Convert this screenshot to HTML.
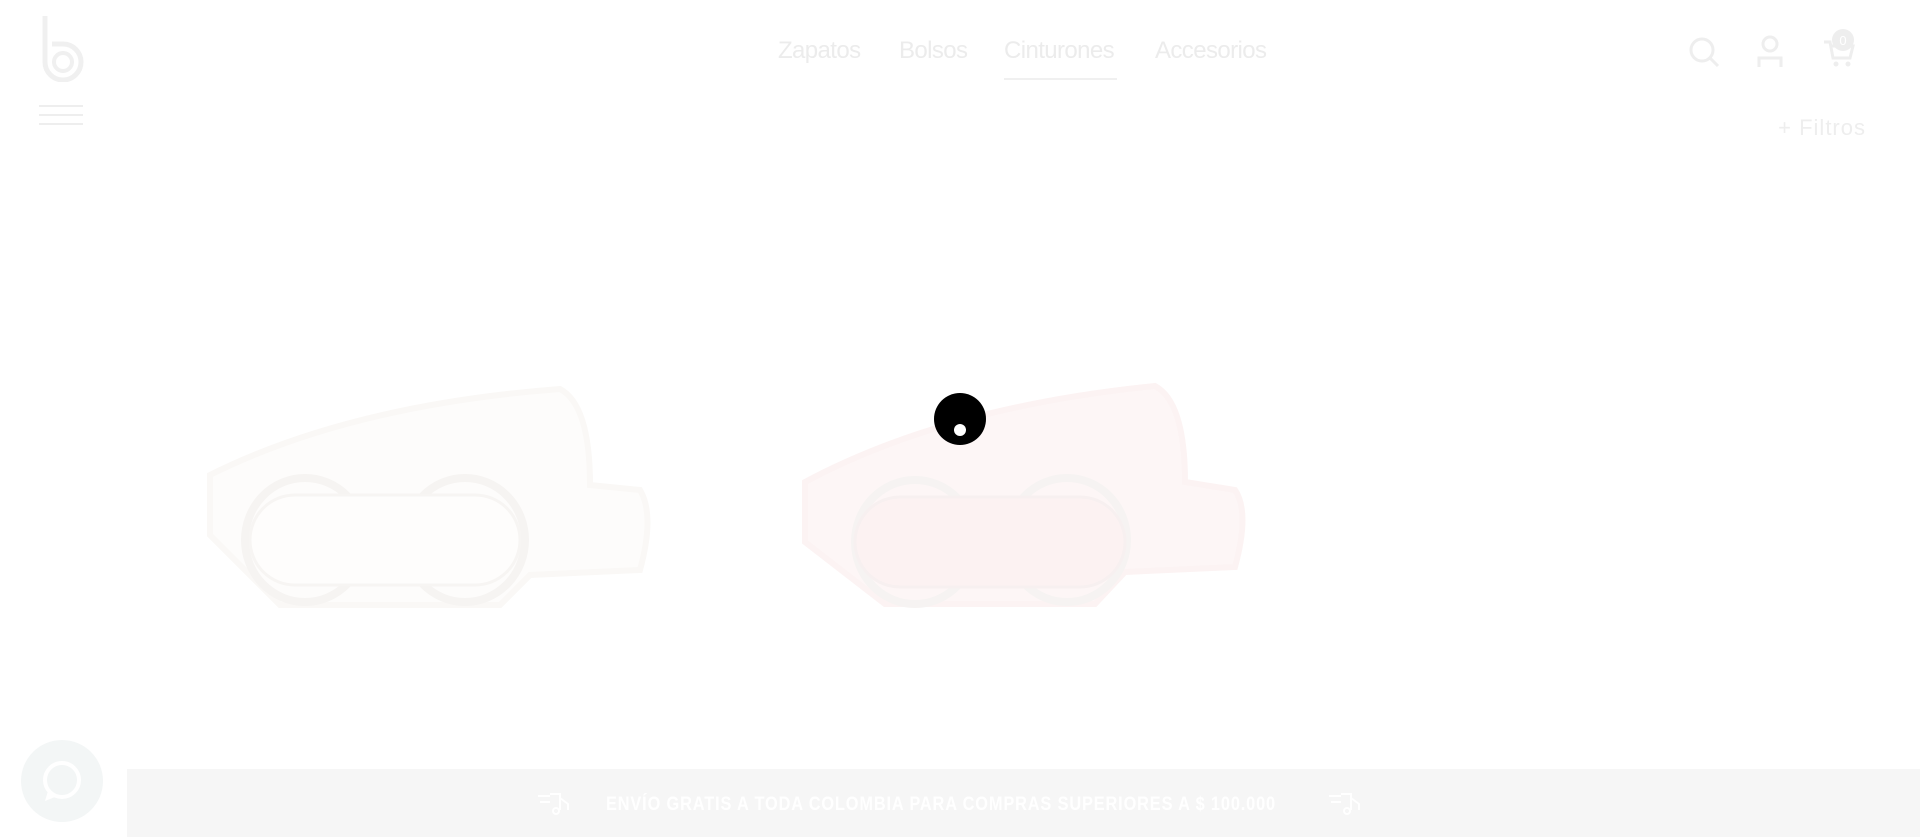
<!DOCTYPE html>
<html><head><meta charset="utf-8"><style>
*{margin:0;padding:0;box-sizing:border-box}
body{width:1920px;height:837px;background:#fff;position:relative;overflow:hidden;font-family:"Liberation Sans",sans-serif}
.nav a{position:absolute;top:37px;font-size:24px;color:#ececec;text-decoration:none;letter-spacing:-0.6px}
.abs{position:absolute}
</style></head><body>
<svg class="abs" style="left:40px;top:14px" width="46" height="68" viewBox="0 0 46 68">
<path d="M5 2 V48 A18 18 0 1 0 23 30 H12" fill="none" stroke="#f0f0f0" stroke-width="5"/>
<circle cx="23" cy="48" r="9" fill="none" stroke="#f0f0f0" stroke-width="4"/>
</svg>
<div class="nav">
<a style="left:778px">Zapatos</a>
<a style="left:899px">Bolsos</a>
<a style="left:1004px">Cinturones</a>
<a style="left:1155px">Accesorios</a>
</div>
<div class="abs" style="left:1004px;top:78px;width:113px;height:2px;background:#f0f0f0"></div>
<svg class="abs" style="left:1688px;top:36px" width="32" height="32"><circle cx="14" cy="14" r="11" fill="none" stroke="#eee" stroke-width="3"/><path d="M22 22 L30 30" stroke="#eee" stroke-width="3"/></svg>
<svg class="abs" style="left:1756px;top:34px" width="28" height="34"><circle cx="14" cy="10" r="7" fill="none" stroke="#eee" stroke-width="3"/><path d="M3 33 V24 H25 V33" fill="none" stroke="#eee" stroke-width="3"/></svg>
<svg class="abs" style="left:1822px;top:28px" width="36" height="40"><path d="M2 14 H8 L11 30 H28 L31 18 H10" fill="none" stroke="#eee" stroke-width="3"/><circle cx="14" cy="36" r="2.5" fill="#eee"/><circle cx="26" cy="36" r="2.5" fill="#eee"/><circle cx="21" cy="12" r="11" fill="#eee"/><text x="21" y="17" font-size="13" text-anchor="middle" fill="#fff" font-family="Liberation Sans">0</text></svg>
<div class="abs" style="left:39px;top:105px;width:44px;height:2px;background:#eee"></div>
<div class="abs" style="left:39px;top:114px;width:44px;height:2px;background:#eee"></div>
<div class="abs" style="left:39px;top:123px;width:44px;height:2px;background:#eee"></div>
<div class="abs" style="right:54px;top:115px;font-size:22px;color:#eee;letter-spacing:1px">+ Filtros</div>
<svg class="abs" style="left:200px;top:375px" width="460" height="260" viewBox="0 0 460 260">
<path d="M10 100 Q150 30 360 14 Q390 30 390 110 L440 115 Q455 140 440 195 L330 200 L300 230 L80 230 L10 160 Z" fill="#fdfcfb" stroke="#faf8f6" stroke-width="6"/>
<ellipse cx="105" cy="165" rx="60" ry="62" fill="none" stroke="#f6f4f2" stroke-width="8"/>
<ellipse cx="265" cy="165" rx="60" ry="62" fill="none" stroke="#f6f4f2" stroke-width="8"/>
<rect x="50" y="120" width="270" height="90" rx="45" fill="#fefdfc" stroke="#f7f5f3" stroke-width="3"/>
</svg>
<svg class="abs" style="left:795px;top:372px" width="460" height="260" viewBox="0 0 460 260">
<path d="M10 110 Q150 35 360 14 Q390 30 390 110 L440 118 Q455 140 440 195 L330 200 L300 232 L90 232 L10 170 Z" fill="#fdf6f6" stroke="#fcf3f3" stroke-width="6"/>
<ellipse cx="120" cy="170" rx="60" ry="62" fill="none" stroke="#f6f3f2" stroke-width="8"/>
<ellipse cx="272" cy="168" rx="60" ry="62" fill="none" stroke="#f6f3f2" stroke-width="8"/>
<rect x="60" y="125" width="270" height="90" rx="45" fill="#fcf2f2" stroke="#f7f0f0" stroke-width="3"/>
</svg>
<div class="abs" style="left:934px;top:393px;width:52px;height:52px;border-radius:50%;background:#000"></div>
<div class="abs" style="left:954px;top:424px;width:12px;height:12px;border-radius:50%;background:#fff"></div>
<div class="abs" style="left:21px;top:740px;width:82px;height:82px;border-radius:50%;background:#f3f6f6"></div>
<svg class="abs" style="left:40px;top:759px" width="44" height="44"><circle cx="22" cy="21" r="17" fill="none" stroke="#fff" stroke-width="4"/><path d="M8 32 L5 42 L15 38" fill="#fff"/></svg>
<div class="abs" style="left:127px;top:769px;width:1793px;height:68px;background:#f6f6f6"></div>
<div class="abs" style="left:606px;top:794px;font-size:19px;font-weight:bold;color:#fff;letter-spacing:1px;white-space:nowrap;transform:scaleX(0.86);transform-origin:0 0">ENVÍO GRATIS A TODA COLOMBIA PARA COMPRAS SUPERIORES A $ 100.000</div>
<svg class="abs" style="left:536px;top:790px" width="36" height="26"><path d="M2 6 H14 M4 12 H14 M14 4 H24 V20 M24 8 L32 14 V20" fill="none" stroke="#fff" stroke-width="2"/><circle cx="20" cy="21" r="3" fill="none" stroke="#fff" stroke-width="2"/></svg>
<svg class="abs" style="left:1327px;top:790px" width="36" height="26"><path d="M2 6 H14 M4 12 H14 M14 4 H24 V20 M24 8 L32 14 V20" fill="none" stroke="#fff" stroke-width="2"/><circle cx="20" cy="21" r="3" fill="none" stroke="#fff" stroke-width="2"/></svg>
</body></html>
